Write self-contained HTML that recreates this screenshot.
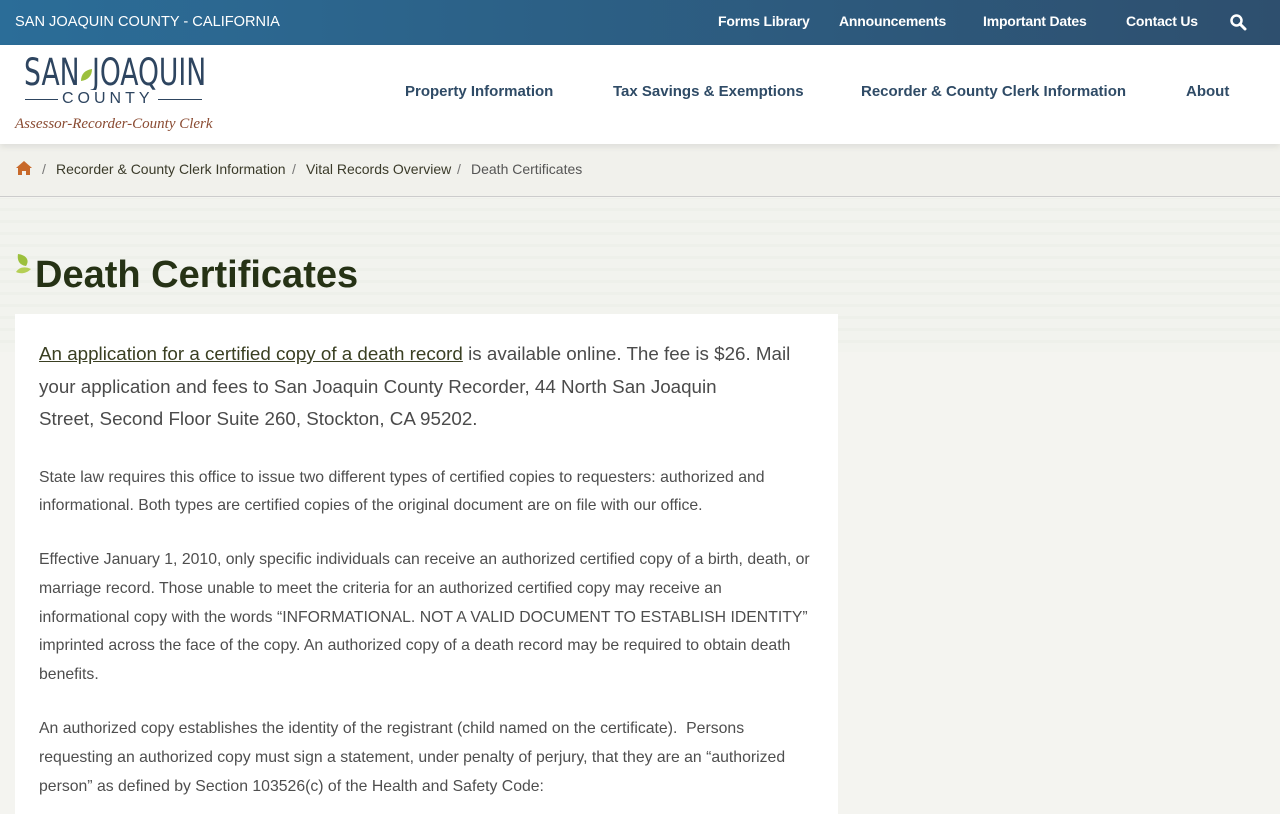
<!DOCTYPE html>
<html><head><meta charset="utf-8"><style>
*{margin:0;padding:0;box-sizing:border-box}
body{width:1280px;height:800px;overflow:hidden;font-family:"Liberation Sans",sans-serif;background:#f4f4f0;position:relative}
.top{height:45px;background:linear-gradient(90deg,#2b6d98,#2e4f6e);color:#fff;position:relative}
.top .l{position:absolute;left:15px;top:14px;font-size:14.6px}
.top .r{position:absolute;top:13px;font-size:14px;font-weight:bold;letter-spacing:-0.2px}
.hdr{height:99px;background:#fff;position:relative;box-shadow:0 3px 6px rgba(0,0,0,.08);z-index:2}
.nav{position:absolute;top:38px;font-size:15px;font-weight:bold;color:#2f4b66}
.bc{height:53px;background:#f1f1ec;border-bottom:1px solid #ccc;position:relative;font-size:14px;color:#3b3b2a}
.bc span{position:absolute;top:17px}
.wave{position:absolute;left:0;top:198px;width:1280px;height:154px;background:repeating-linear-gradient(0deg,#f2f3ee 0 9px,#eef0ea 9px 12px)}
h1{position:absolute;left:35px;top:254px;font-size:38px;color:#263215;font-weight:bold}
.box{position:absolute;left:15px;top:314px;width:823px;height:500px;background:#fff;padding:24px 24px;white-space:nowrap}
.p1{font-size:18.8px;line-height:32.5px;color:#4b4b4b;margin-bottom:28px}
.p1 a{color:#3a3f22;text-decoration:underline}
p{font-size:15.8px;line-height:28.8px;color:#4e4e4e;margin-bottom:25px}
.lg{position:absolute;top:6px;font-size:37px;color:#2e4560;transform:scaleX(.8);transform-origin:left;font-family:'DejaVu Sans Condensed','Liberation Sans',sans-serif}
</style></head><body>
<div class="top"><div class="l">SAN JOAQUIN COUNTY - CALIFORNIA</div>
<div class="r" style="left:718px">Forms Library</div>
<div class="r" style="left:839px">Announcements</div>
<div class="r" style="left:983px">Important Dates</div>
<div class="r" style="left:1126px">Contact Us</div>
<svg style="position:absolute;left:1229px;top:13px" width="18" height="18" viewBox="0 0 18 18"><circle cx="7.5" cy="7.5" r="5" fill="none" stroke="#fff" stroke-width="2.5"/><path d="M11 11l5 5" stroke="#fff" stroke-width="3" stroke-linecap="round"/></svg>
</div>
<div class="hdr">
<div class="lg" style="left:24px">SAN</div>
<div class="lg" style="left:92px">JOAQUIN</div>
<svg style="position:absolute;left:79px;top:22px" width="14" height="16" viewBox="0 0 14 16"><path d="M2 14C2 7 6 3 13 2c0 7-4 11-11 12z" fill="#9cc03c"/></svg>
<div style="position:absolute;left:25px;top:54px;width:177px;border-top:1px solid #2e4560"></div>
<div style="position:absolute;left:58px;top:45px;background:#fff;padding:0 4px;font-size:16px;letter-spacing:4px;color:#2e4560">COUNTY</div>
<div style="position:absolute;left:15px;top:71px;font-size:15px;font-style:italic;color:#8a4b32;font-family:'Liberation Serif',serif">Assessor-Recorder-County Clerk</div>
<div class="nav" style="left:405px">Property Information</div>
<div class="nav" style="left:613px">Tax Savings &amp; Exemptions</div>
<div class="nav" style="left:861px">Recorder &amp; County Clerk Information</div>
<div class="nav" style="left:1186px">About</div>
</div>
<div class="bc">
<svg style="position:absolute;left:15px;top:16px" width="18" height="15" viewBox="0 0 18 15"><path d="M9 1L1 8h2v7h4v-4h4v4h4V8h2z" fill="#c8692a"/></svg>
<span style="left:42px;color:#777">/</span><span style="left:56px">Recorder &amp; County Clerk Information</span>
<span style="left:292px;color:#777">/</span><span style="left:306px">Vital Records Overview</span>
<span style="left:457px;color:#777">/</span><span style="left:471px;color:#555">Death Certificates</span>
</div>
<div class="wave"></div>
<svg style="position:absolute;left:15px;top:252px" width="20" height="24" viewBox="0 0 20 24"><path d="M3 2c8 1 12 6 8 12C4 13 2 8 3 2z" fill="#9cc03c"/><path d="M1 20c3-5 9-6 15-3-5 5-11 5-15 3z" fill="#b5cf55"/></svg>
<h1>Death Certificates</h1>
<div class="box">
<div class="p1"><a>An application for a certified copy of a death record</a> is available online. The fee is $26. Mail<br>your application and fees to San Joaquin County Recorder, 44 North San Joaquin<br>Street, Second Floor Suite 260, Stockton, CA 95202.</div>
<p>State law requires this office to issue two different types of certified copies to requesters: authorized and<br>informational. Both types are certified copies of the original document are on file with our office.</p>
<p>Effective January 1, 2010, only specific individuals can receive an authorized certified copy of a birth, death, or<br>marriage record. Those unable to meet the criteria for an authorized certified copy may receive an<br>informational copy with the words “INFORMATIONAL. NOT A VALID DOCUMENT TO ESTABLISH IDENTITY”<br>imprinted across the face of the copy. An authorized copy of a death record may be required to obtain death<br>benefits.</p>
<p>An authorized copy establishes the identity of the registrant (child named on the certificate).&nbsp; Persons<br>requesting an authorized copy must sign a statement, under penalty of perjury, that they are an “authorized<br>person” as defined by Section 103526(c) of the Health and Safety Code:</p>
</div>
</body></html>
